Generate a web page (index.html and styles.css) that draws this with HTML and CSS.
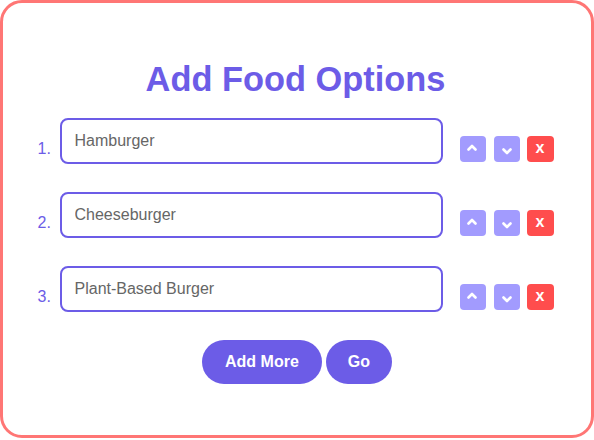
FILE: index.html
```html
<!DOCTYPE html>
<html lang="en">
<head>
<meta charset="utf-8">
<title>Add Food Options</title>
<link rel="stylesheet" href="styles.css">
</head>
<body>
<div class="card">
  <h1 class="title">Add Food Options</h1>
  <div class="list">
    <div class="row">
      <span class="num">1.</span>
      <div class="field"><input class="input" type="text" value="Hamburger"></div>
      <div class="controls">
        <button class="btn move"><svg viewBox="0 0 10 10" class="ico up"><path d="M1.5 6.5 L5 3 L8.5 6.5"/></svg></button>
        <button class="btn move"><svg viewBox="0 0 10 10" class="ico down"><path d="M1.5 3.5 L5 7 L8.5 3.5"/></svg></button>
        <button class="btn del">x</button>
      </div>
    </div>
    <div class="row">
      <span class="num">2.</span>
      <div class="field"><input class="input" type="text" value="Cheeseburger"></div>
      <div class="controls">
        <button class="btn move"><svg viewBox="0 0 10 10" class="ico up"><path d="M1.5 6.5 L5 3 L8.5 6.5"/></svg></button>
        <button class="btn move"><svg viewBox="0 0 10 10" class="ico down"><path d="M1.5 3.5 L5 7 L8.5 3.5"/></svg></button>
        <button class="btn del">x</button>
      </div>
    </div>
    <div class="row">
      <span class="num">3.</span>
      <div class="field"><input class="input" type="text" value="Plant-Based Burger"></div>
      <div class="controls">
        <button class="btn move"><svg viewBox="0 0 10 10" class="ico up"><path d="M1.5 6.5 L5 3 L8.5 6.5"/></svg></button>
        <button class="btn move"><svg viewBox="0 0 10 10" class="ico down"><path d="M1.5 3.5 L5 7 L8.5 3.5"/></svg></button>
        <button class="btn del">x</button>
      </div>
    </div>
  </div>
  <div class="actions">
    <button class="pill">Add More</button>
    <button class="pill go">Go</button>
  </div>
</div>
</body>
</html>
```
FILE: styles.css
```css
* { box-sizing: border-box; }
html, body { margin: 0; padding: 0; background: #fff; }
body { font-family: "Liberation Sans", Arial, sans-serif; }

.card {
  width: 594px;
  height: 438px;
  border: 3px solid #ff7675;
  border-radius: 22px;
  padding-top: 57px;
  background: #fff;
}

.title {
  margin: 0 0 19px;
  padding-right: 3px;
  text-align: center;
  font-size: 34.4px;
  font-weight: bold;
  color: #6c5ce7;
  line-height: 39px;
}

.list {
  display: flex;
  flex-direction: column;
  gap: 12px;
}

.row {
  display: flex;
  align-items: center;
  justify-content: center;
  height: 62px;
  padding-right: 3px;
}

.num {
  width: 12px;
  font-size: 16px;
  color: #6c5ce7;
  margin-right: 10px;
}

.field {
  align-self: flex-start;
}

.input {
  display: block;
  width: 383px;
  height: 46px;
  border: 2px solid #6c5ce7;
  border-radius: 8px;
  padding: 0 13px;
  font-family: "Liberation Sans", Arial, sans-serif;
  font-size: 16px;
  color: #666;
  background: #fff;
  outline: none;
}

.controls {
  display: flex;
  align-items: center;
  margin-left: 17px;
  gap: 8px;
}

.btn {
  width: 26px;
  height: 26px;
  border: none;
  border-radius: 4px;
  padding: 0;
  display: flex;
  align-items: center;
  justify-content: center;
  color: #fff;
  font-family: "Liberation Sans", Arial, sans-serif;
}

.move { background: #a29bfe; }

.del {
  width: 27px;
  margin-left: -1px;
  background: #ff4d4d;
  font-size: 16px;
  font-weight: bold;
  line-height: 1;
  padding-bottom: 2px;
}

.ico {
  width: 10px;
  height: 10px;
  fill: none;
  stroke: #fff;
  stroke-width: 2.6;
  stroke-linecap: round;
  stroke-linejoin: round;
}

.ico.up { margin: 0 2px 2px 0; }
.ico.down { margin-top: 4px; }

.actions {
  display: flex;
  justify-content: center;
  gap: 4px;
  margin-top: 12px;
}

.pill {
  height: 44px;
  padding: 0 23px;
  border: none;
  border-radius: 22px;
  background: #6c5ce7;
  color: #fff;
  font-family: "Liberation Sans", Arial, sans-serif;
  font-size: 16px;
  font-weight: bold;
}

.pill.go { padding: 0 22px; }
```
